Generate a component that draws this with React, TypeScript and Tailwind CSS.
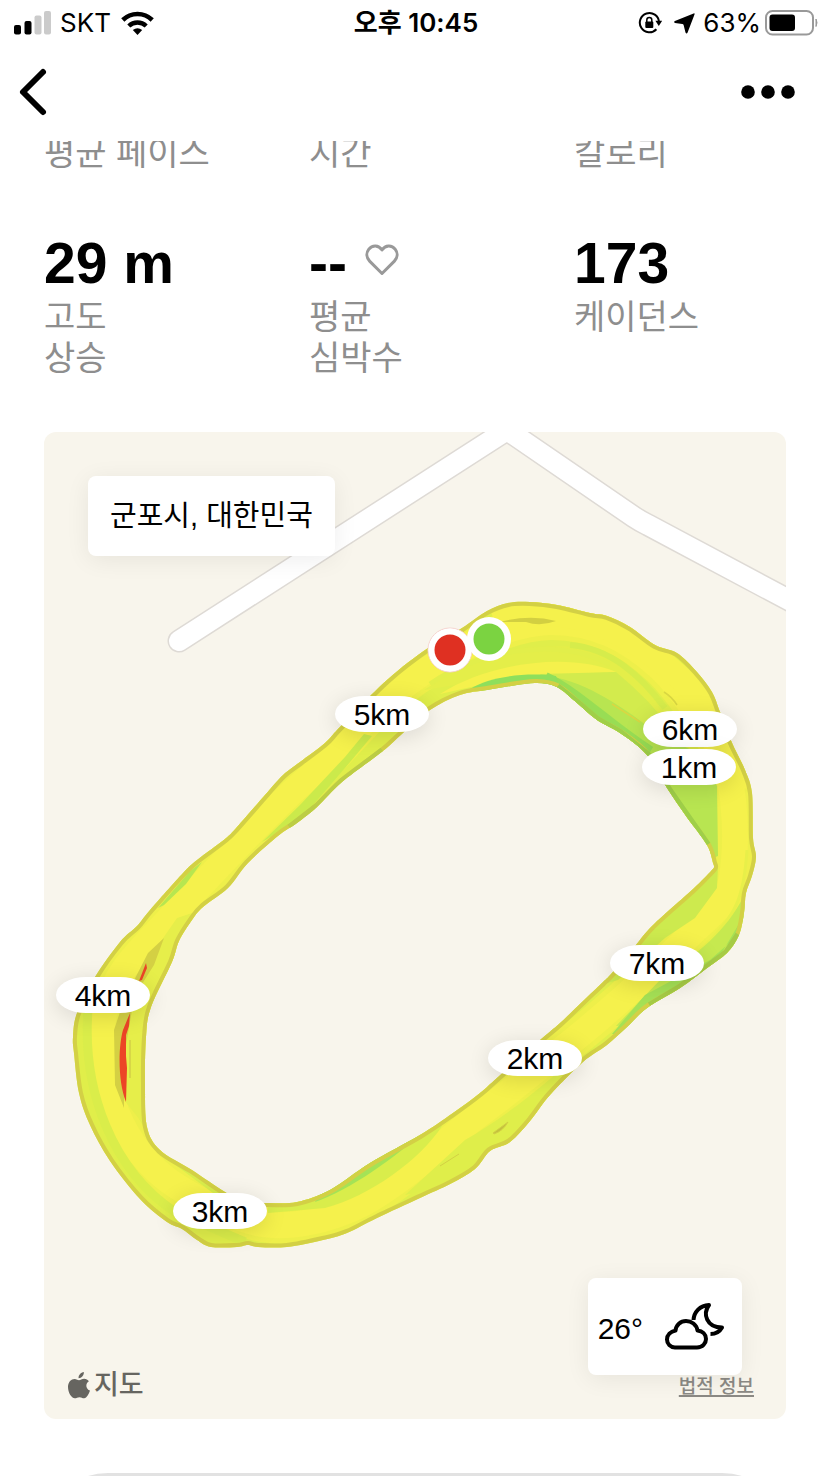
import React from "react";

type Point = [number, number];

const MAP = { x: 44, y: 432, width: 742, height: 987 };

const outerEdge: Point[] = [
  [340, 727], [387, 680], [428, 648], [462, 628], [487, 611], [508, 603], [530, 602], [557, 605],
  [590, 613], [607, 616], [630, 627], [655, 645], [677, 653], [697, 672], [712, 692], [720, 712],
  [732, 743], [745, 770], [752, 793], [753, 838], [756, 857], [752, 876], [746, 893], [744, 913],
  [739, 935], [727, 953], [707, 968], [680, 988], [647, 1008], [627, 1027], [607, 1045], [583, 1062],
  [550, 1095], [530, 1121], [510, 1142], [490, 1151], [475, 1169], [450, 1184], [420, 1198],
  [377, 1218], [347, 1233], [323, 1240], [287, 1247], [258, 1247], [248, 1245], [237, 1247],
  [211, 1247], [197, 1240], [182, 1229], [167, 1222], [140, 1199], [110, 1161], [90, 1125],
  [79, 1093], [74, 1053], [73, 1037], [77, 1013], [95, 977], [120, 942], [137, 926], [150, 910],
  [183, 873], [197, 860], [225, 839], [237, 827], [265, 795], [283, 775], [300, 762], [325, 743],
];

const innerEdge: Point[] = [
  [342, 782], [383, 751], [403, 733], [430, 710], [460, 695], [487, 690], [517, 685], [537, 683],
  [557, 687], [577, 703], [597, 720], [620, 733], [647, 755], [667, 788], [686, 816], [707, 845],
  [713, 863], [714, 867], [711, 871], [693, 889], [653, 925], [635, 946], [612, 973], [602, 983],
  [583, 1001], [560, 1023], [540, 1040], [498, 1077], [480, 1093], [453, 1113], [420, 1135],
  [370, 1163], [330, 1190], [297, 1202], [268, 1203], [246, 1202], [225, 1192], [192, 1170],
  [160, 1150], [147, 1127], [145, 1085], [146, 1037], [151, 1007], [172, 962], [179, 941],
  [192, 920], [203, 907], [228, 888], [248, 863], [278, 836], [297, 823], [317, 807],
];

const yellowLine: Point[] = [
  [330, 758], [380, 706], [430, 668], [490, 636], [550, 622], [610, 634], [660, 668], [698, 715],
  [722, 755], [733, 800], [734, 860], [724, 900], [692, 933], [645, 978], [600, 1018], [555, 1055],
  [505, 1095], [462, 1128], [410, 1172], [362, 1204], [310, 1222], [262, 1224], [215, 1207],
  [165, 1178], [132, 1142], [112, 1100], [103, 1050], [105, 1010], [125, 968], [168, 920],
  [208, 878], [248, 836], [288, 796],
];

const markers = [
  { label: "5km", x: 382, y: 714 },
  { label: "6km", x: 690, y: 729 },
  { label: "1km", x: 689, y: 767 },
  { label: "7km", x: 657, y: 963 },
  { label: "2km", x: 535, y: 1058 },
  { label: "3km", x: 220, y: 1211 },
  { label: "4km", x: 103, y: 995 },
];

// closed Catmull-Rom curve through the given points
const smooth = (points: Point[]) => {
  const n = points.length;
  let d = `M${points[0][0]} ${points[0][1]}`;
  for (let i = 0; i < n; i++) {
    const p0 = points[(i - 1 + n) % n];
    const p1 = points[i];
    const p2 = points[(i + 1) % n];
    const p3 = points[(i + 2) % n];
    d += `C${p1[0] + (p2[0] - p0[0]) / 6} ${p1[1] + (p2[1] - p0[1]) / 6} ${p2[0] - (p3[0] - p1[0]) / 6} ${p2[1] - (p3[1] - p1[1]) / 6} ${p2[0]} ${p2[1]}`;
  }
  return d + "Z";
};

const trackPath = smooth(outerEdge) + smooth(innerEdge);

const StatusBar = () => (
  <div className="grid h-[46px] grid-cols-3 items-center pl-3.5 pr-3 font-['Inter','Noto_Sans_CJK_KR',sans-serif] text-[26px] leading-8">
    <div className="flex items-center gap-2">
      <svg width="38" height="24" viewBox="0 0 38 24" aria-hidden="true">
        <rect x="0" y="14" width="7" height="9.5" rx="2" />
        <rect x="10.5" y="10" width="7" height="13.5" rx="2" />
        <rect x="20.5" y="4.5" width="7" height="19" rx="2" fill="#cbcbcb" />
        <rect x="30" y="0" width="7" height="23.5" rx="2" fill="#cbcbcb" />
      </svg>
      <span>SKT</span>
      <svg width="34" height="24" viewBox="0 0 34 24" fill="none" stroke="#000" className="ml-0.5" aria-hidden="true">
        <path d="M1.8 9A21 21 0 0 1 31.2 9" strokeWidth="4.6" />
        <path d="M7.8 15A12.6 12.6 0 0 1 25.2 15" strokeWidth="4.4" />
        <path d="M11.8 19Q16.5 15.4 21.2 19L16.5 24Z" fill="#000" stroke="none" />
      </svg>
    </div>
    <span className="text-center font-semibold">오후 10:45</span>
    <div className="flex items-center justify-end">
      <svg width="24" height="24" viewBox="0 0 24 24" className="mr-3" aria-hidden="true">
        <path d="M21 11A9.6 9.6 0 1 0 18.4 18.2" fill="none" stroke="#000" strokeWidth="2" />
        <path d="M17.4 9.800H24.200L20.800 15Z" />
        <rect x="7.3" y="10.6" width="8" height="6.4" rx="1" />
        <path d="M8.8 11V9A2.500 2.500 0 0 1 13.800 9V11" fill="none" stroke="#000" strokeWidth="1.5" />
      </svg>
      <svg width="21" height="21" viewBox="0 0 21 21" className="mr-2" aria-hidden="true">
        <path d="M19.600 .4Q21 0 20.500 1.500L13.600 19.600Q12.600 21.400 11.500 19.600L9.600 12Q9.300 11 8.300 10.900L1 9.900Q-.7 9 .9 8Z" />
      </svg>
      <span className="mr-1">63%</span>
      <svg width="53" height="26" viewBox="0 0 53 26" aria-hidden="true">
        <rect x="1" y="1" width="47" height="23.5" rx="6.5" fill="#fff" stroke="#999" strokeWidth="2" />
        <rect x="4.5" y="4.5" width="25.5" height="16.5" rx="3" />
        <path d="M51 9Q53 12.7 51 16.5Z" fill="#999" stroke="#999" />
      </svg>
    </div>
  </div>
);

const NavBar = () => (
  <nav className="flex h-[95px] items-center justify-between pb-1 pl-4 pr-8">
    <button type="button" aria-label="뒤로" className="p-0">
      <svg width="34" height="50" viewBox="0 0 34 50" fill="none" stroke="#000" strokeWidth="6" strokeLinecap="round" strokeLinejoin="round">
        <path d="M27 5L7 25L27 45" />
      </svg>
    </button>
    <button type="button" aria-label="더 보기" className="p-0">
      <svg width="58" height="16" viewBox="0 0 58 16">
        <circle cx="8" cy="8" r="6.8" />
        <circle cx="28" cy="8" r="6.8" />
        <circle cx="48" cy="8" r="6.8" />
      </svg>
    </button>
  </nav>
);

const Stat = ({ value, label, icon }: { value: string; label: string[]; icon?: React.ReactNode }) => (
  <div>
    <div className="mb-0.5 flex h-16 items-center gap-[18px]">
      <span className="text-[57px] font-bold leading-[64px]">{value}</span>
      {icon}
    </div>
    {label.map((line) => (
      <p key={line} className="text-[34px] leading-[41px] text-[#8e8e8e]">{line}</p>
    ))}
  </div>
);

const HeartIcon = () => (
  <svg width="34" height="32" viewBox="0 0 34 32" fill="none" stroke="#999" strokeWidth="3" strokeLinejoin="round" className="mb-1.5" aria-hidden="true">
    <path d="M17 29.5L4.6 17.1C1.4 13.8 1 9 3.7 5.4C7.3 .8 13.6 1 17 6C20.4 1 26.7 .8 30.3 5.4C33 9 32.6 13.8 29.4 17.1Z" />
  </svg>
);

const RouteDrawing = () => (
  <svg className="block h-auto w-full" viewBox={`${MAP.x} ${MAP.y} ${MAP.width} ${MAP.height}`} aria-hidden="true">
    <defs>
      <clipPath id="track">
        <path d={trackPath} clipRule="evenodd" />
      </clipPath>
    </defs>

    <g fill="none" strokeLinecap="round" strokeLinejoin="miter">
      <path d="M179 641L507 430L634 517Q640 521 648 525L800 606" stroke="#dedad5" strokeWidth="23" />
      <path d="M179 641L507 430L634 517Q640 521 648 525L800 606" stroke="#fff" strokeWidth="20" />
    </g>

    <g clipPath="url(#track)">
      <rect x={MAP.x} y={MAP.y} width={MAP.width} height={MAP.height} fill="#e0ee4a" />
      <path d={smooth(yellowLine)} fill="none" stroke="#eeef4a" strokeWidth="36" />
      <path d={smooth(yellowLine)} fill="none" stroke="#f5f14c" strokeWidth="26" />

      {/* top bend */}
      <path d="M495 622C540 603 600 616 650 653S725 720 735 790" fill="none" stroke="#f5f14c" strokeWidth="24" />
      <path d="M424 690C470 660 530 640 585 648S650 690 668 726L640 722L600 690L540 671Z" fill="#e4ee49" />
      <path d="M430 684C480 650 560 636 610 665" fill="none" stroke="#e2ee4a" strokeWidth="5" />
      <path d="M570 645C610 648 640 675 665 708" fill="none" stroke="#d6ec4b" strokeWidth="6" />
      <path d="M440 694C490 662 570 652 616 672Q570 674 520 676Z" fill="#f5f14c" />
      <path d="M540 674L616 672Q650 700 672 730L700 760L716 800V862L660 790L600 735Z" fill="#d3eb4d" />
      <path d="M543 676C580 678 620 705 650 728L700 755L717 786L718 856L708 860L660 790L600 730Z" fill="#b8e551" />
      <path d="M545 678C580 695 610 727 650 752" fill="none" stroke="#98dd54" strokeWidth="12" />
      <path d="M470 689C490 676 530 672 556 676L560 690L500 694Z" fill="#8edf5c" />
      <path d="M500 622Q530 614 556 621Q540 627 526 622Z" fill="#d2cf41" />
      <path d="M664 692Q672 697 677 705M612 704L640 722" fill="none" stroke="#d9d742" strokeWidth="1.5" />

      {/* right side and 7km */}
      <path d="M747 850C744 895 738 915 700 950L655 990" fill="none" stroke="#e8ef49" strokeWidth="3" />
      <path d="M718 866L655 925L600 985L618 980L665 938L695 918L717 888Z" fill="#cdea4e" />
      <path d="M744 896C725 932 700 952 660 980L616 1026L640 1024L750 960Z" fill="#c6e94f" />
      <path d="M750 905L735 938L710 960L645 995L612 1034L622 1034L700 990Z" fill="#a5e155" />

      {/* 2km to 3km */}
      <path d="M580 1052C540 1090 500 1120 465 1140L405 1195L480 1180L540 1115Z" fill="#dfee4a" />
      <path d="M493 1133L508 1122Q503 1131 494 1134ZM440 1166L459 1154" fill="#c4c13e" stroke="#d2d044" strokeWidth="1" />
      <path d="M268 1203L300 1200L425 1128L442 1126C420 1160 370 1196 325 1208L268 1213Z" fill="#d9ed4b" />
      <path d="M430 1126C395 1158 350 1190 315 1202L320 1190L390 1145Z" fill="#a4e356" />

      {/* left side */}
      <path d="M88 1010C82 1090 112 1170 175 1212L245 1242" fill="none" stroke="#daed4a" strokeWidth="9" />
      <path d="M158 1152L230 1195L260 1209L225 1202Z" fill="#d9ed4b" />
      <path d="M177 918L195 912L155 1000L152 1128L140 1120L124 1100L122 1020L148 960Z" fill="#e6ee4a" />
      <path d="M148 953L164 938L154 965L142 984L132 1010L124 1056V1108L115 1085L114 1030L124 1000Z" fill="#d4d043" />
      <path d="M146 963L147 968L142 980L139 981ZM130 1013L129 1026L126 1035L126 1056L127 1068L126 1102C118 1082 118 1048 123 1030Z" fill="#ec4526" />
      <path d="M130 1040V1078" stroke="#d8d747" strokeWidth="2" />

      {/* 4km to 5km */}
      <path d="M158 908L190 871L202 862L186 884L164 905Z" fill="#b7e650" />
      <path d="M262 842L300 805L345 757L364 734L372 736L345 768L300 820Z" fill="#cbea4b" />

      <path d={trackPath} fill="none" stroke="#d3d045" strokeWidth="8" />
      <path d="M557 687L577 703L597 720L620 733L647 755L667 788L707 845" fill="none" stroke="#9fcf49" strokeWidth="8" />
      <path d="M739 935L727 953L707 968L680 988L650 1006" fill="none" stroke="#a6cb46" strokeWidth="8" />
      <path d="M383 751L342 782L317 807L290 828" fill="none" stroke="#bccd45" strokeWidth="8" />
    </g>

    <circle cx="450" cy="650" r="22" fill="#fff" stroke="#f6d2cd" strokeWidth="1" />
    <circle cx="489" cy="639" r="22" fill="#fff" />
    <circle cx="489" cy="639" r="15.5" fill="#7bd341" />
    <circle cx="450" cy="650" r="21.5" fill="#fff" />
    <circle cx="450" cy="650" r="15.5" fill="#df3022" />
  </svg>
);

const WeatherIcon = () => (
  <svg width="60" height="50" viewBox="0 0 60 50" fill="none" stroke="#000" strokeWidth="4" strokeLinejoin="round" aria-hidden="true">
    <path d="M11 45.5H33C38.5 45.5 42 41.5 42 37C42 32.5 38.500 29 33.500 28.500C32.500 22.500 27.500 19 22 19C16.500 19 12 23 11.500 28.500C6.500 29.500 3 33 3 37.500C3 42 6.500 45.500 11 45.500Z" />
    <path d="M29.5 18C30 10 36 3.500 45 3C38.500 12 42.500 25.500 58 25.500C55.500 30 51.500 32 46.500 32" />
  </svg>
);

const RouteMap = () => (
  <section className="relative overflow-hidden rounded-xl bg-[#f8f5ec]" aria-label="러닝 경로">
    <RouteDrawing />
    {markers.map(({ label, x, y }) => (
      <span
        key={label}
        className="absolute flex h-9 w-[94px] -translate-x-1/2 -translate-y-1/2 items-center justify-center rounded-[30px/18px] bg-white pt-0.5 text-[30px] leading-9 shadow-[0_4px_22px_rgba(0,0,0,0.12)]"
        style={{ left: `${((x - MAP.x) / MAP.width) * 100}%`, top: `${((y - MAP.y) / MAP.height) * 100}%` }}
      >
        {label}
      </span>
    ))}
    <div className="absolute left-11 top-11 flex h-20 items-center rounded-lg bg-white px-[22px] text-[29px] leading-10 shadow-[0_4px_24px_rgba(0,0,0,0.07)]">
      군포시, 대한민국
    </div>
    <div className="absolute bottom-[18px] left-6 flex items-center gap-1 text-[27px] font-medium leading-8 text-[#666560]">
      <svg width="22" height="27" viewBox="0 0 22 27" fill="#666560" aria-hidden="true">
        <path d="M15.8 0C16.2 3.2 13.6 6.2 10.6 6.2C10.2 3.3 12.9 .4 15.8 0Z" />
        <path d="M11 8.2C12.5 8.2 13.8 6.8 16.2 6.8C18.1 6.8 19.8 7.7 20.9 9.2C17.1 11.6 17.7 17 22 18.6C21 21.8 18.8 26.2 16.2 26.3C14.4 26.4 13.6 25.2 11.5 25.2C9.4 25.2 8.6 26.3 6.8 26.3C3.4 26.3 0 20.3 0 15C0 9.8 3.3 6.9 6.5 6.9C8.6 6.9 9.8 8.2 11 8.2Z" />
      </svg>
      <span>지도</span>
    </div>
    <a href="#legal" className="absolute bottom-5 right-8 text-[19px] font-medium leading-6 text-[#8b8984] underline decoration-2 underline-offset-2">
      법적 정보
    </a>
    <div className="absolute bottom-11 right-11 flex h-[97px] items-center rounded-lg bg-white pl-2.5 pr-[18px] text-[30px] shadow-[0_4px_24px_rgba(0,0,0,0.07)]">
      <span className="mr-[21px] mt-1">26°</span>
      <WeatherIcon />
    </div>
  </section>
);

const App = () => {
  return (
    <div className="flex h-screen flex-col overflow-hidden bg-white font-['Liberation_Sans','Noto_Sans_CJK_KR',sans-serif] text-black">
      <header className="shrink-0">
        <StatusBar />
        <NavBar />
      </header>

      <main className="min-h-0 flex-1 overflow-hidden px-11">
        <div className="-mt-2 grid grid-cols-3 gap-x-[53px] text-[34px] leading-[41px] text-[#8e8e8e]">
          <p>평균 페이스</p>
          <p>시간</p>
          <p>칼로리</p>
        </div>

        <div className="mt-[57px] grid grid-cols-3 gap-x-[53px]">
          <Stat value="29 m" label={["고도", "상승"]} />
          <Stat value="--" label={["평균", "심박수"]} icon={<HeartIcon />} />
          <Stat value="173" label={["케이던스"]} />
        </div>

        <div className="mt-[53px]">
          <RouteMap />
        </div>

        <div className="mt-[54px] h-32 rounded-[64px] border-[3px] border-[#e2e2e2]" />
      </main>
    </div>
  );
};

export default App;
